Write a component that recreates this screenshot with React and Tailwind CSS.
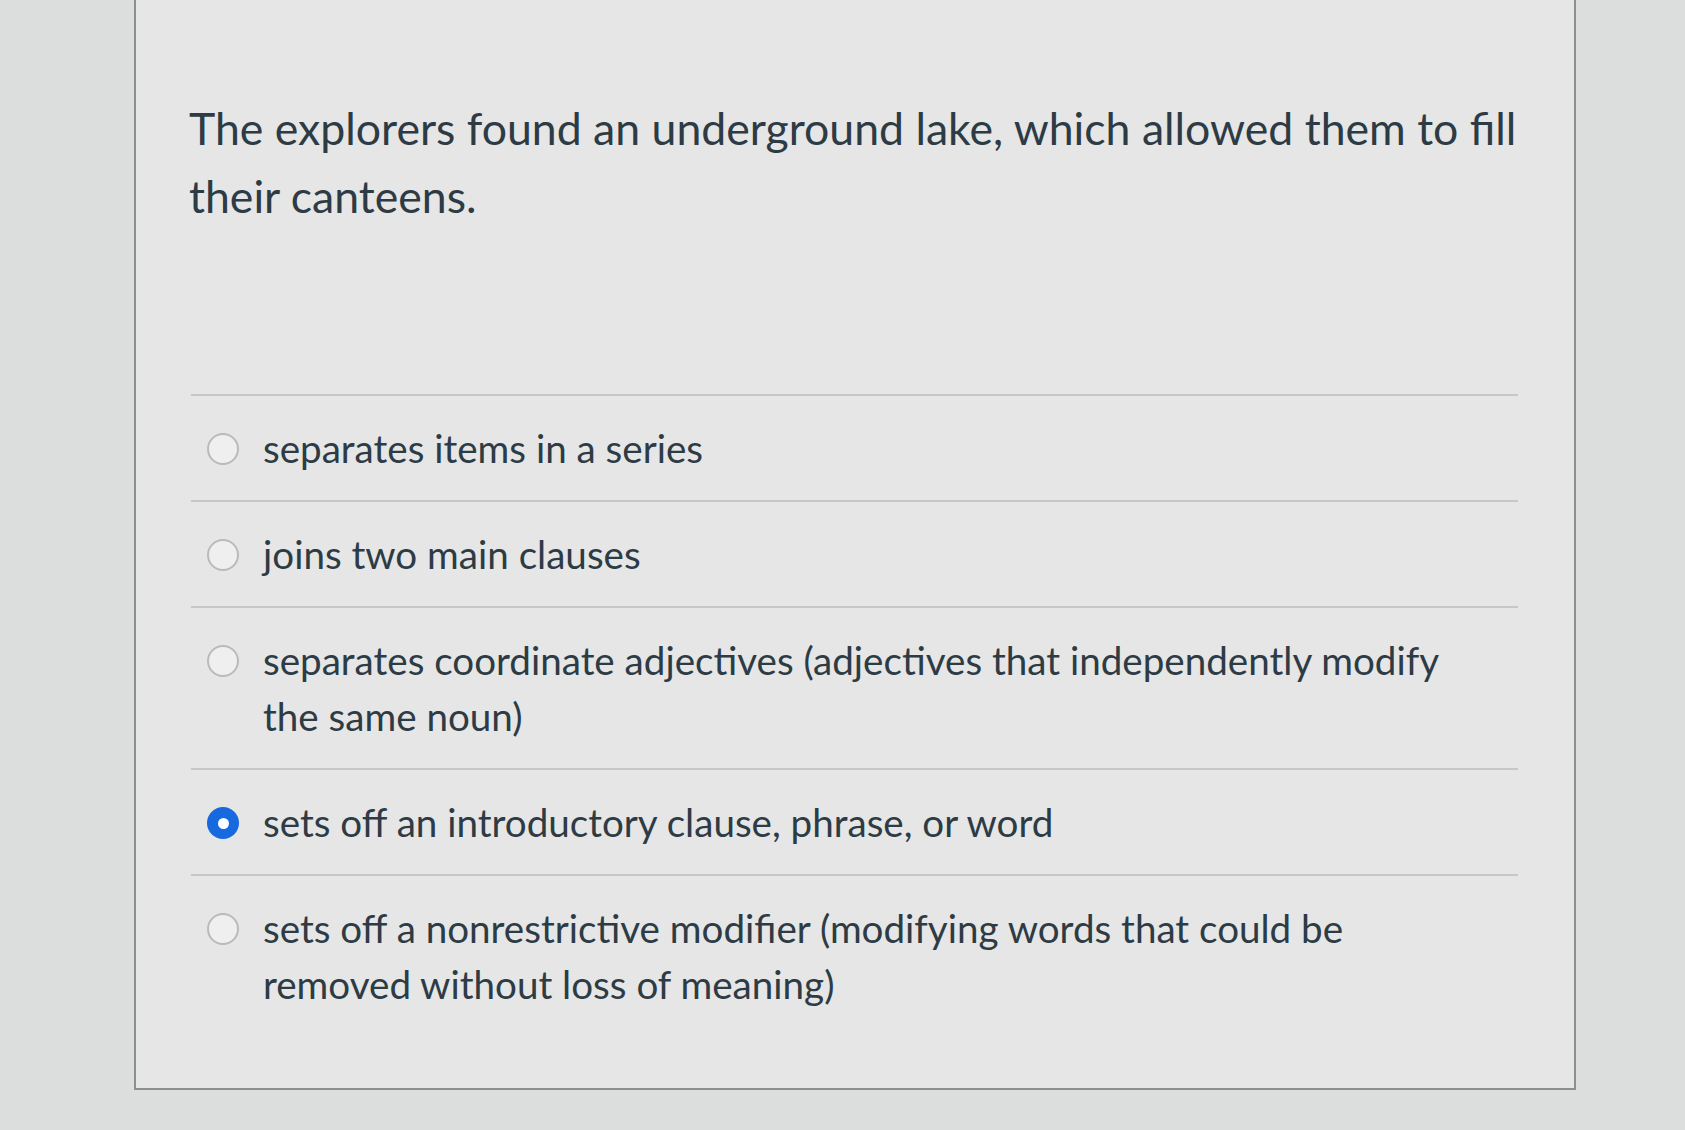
import React from "react";

const options = [
  { text: "separates items in a series", selected: false },
  { text: "joins two main clauses", selected: false },
  {
    text: "separates coordinate adjectives (adjectives that independently modify the same noun)",
    selected: false,
  },
  { text: "sets off an introductory clause, phrase, or word", selected: true },
  {
    text: "sets off a nonrestrictive modifier (modifying words that could be removed without loss of meaning)",
    selected: false,
  },
];

function Radio({ selected }) {
  if (selected) {
    return (
      <span className="mt-[13px] flex h-[32px] w-[32px] shrink-0 items-center justify-center rounded-full bg-[#1769e0]">
        <span className="h-[11px] w-[11px] rounded-full bg-white" />
      </span>
    );
  }
  return (
    <span className="mt-[13px] h-[32px] w-[32px] shrink-0 rounded-full border-2 border-[#b9bbbb] bg-[#eeefee]" />
  );
}

export default function App() {
  return (
    <div className="min-h-[1130px] w-full overflow-hidden bg-[#dcdedd] font-['Lato','Noto_Sans',sans-serif] text-[#2d3b45]">
      <div className="ml-[134px] h-[1090px] w-[1442px] border-2 border-t-0 border-[#8d8f8f] bg-[#e5e6e5]">
        <div className="pl-[53px] pt-[94px]">
          <p className="w-[1350px] text-[44.6px] leading-[68px]">
            The explorers found an underground lake, which allowed them to fill their canteens.
          </p>
        </div>
        <div className="ml-[55px] mt-[164px] w-[1327px]">
          {options.map((o, i) => (
            <div
              key={i}
              className="flex items-start gap-[24px] border-t-2 border-[#c6c8c8] py-[24px] pl-[16px]"
            >
              <Radio selected={o.selected} />
              <span className="w-[1220px] text-[38.6px] leading-[56px]">{o.text}</span>
            </div>
          ))}
        </div>
      </div>
    </div>
  );
}
